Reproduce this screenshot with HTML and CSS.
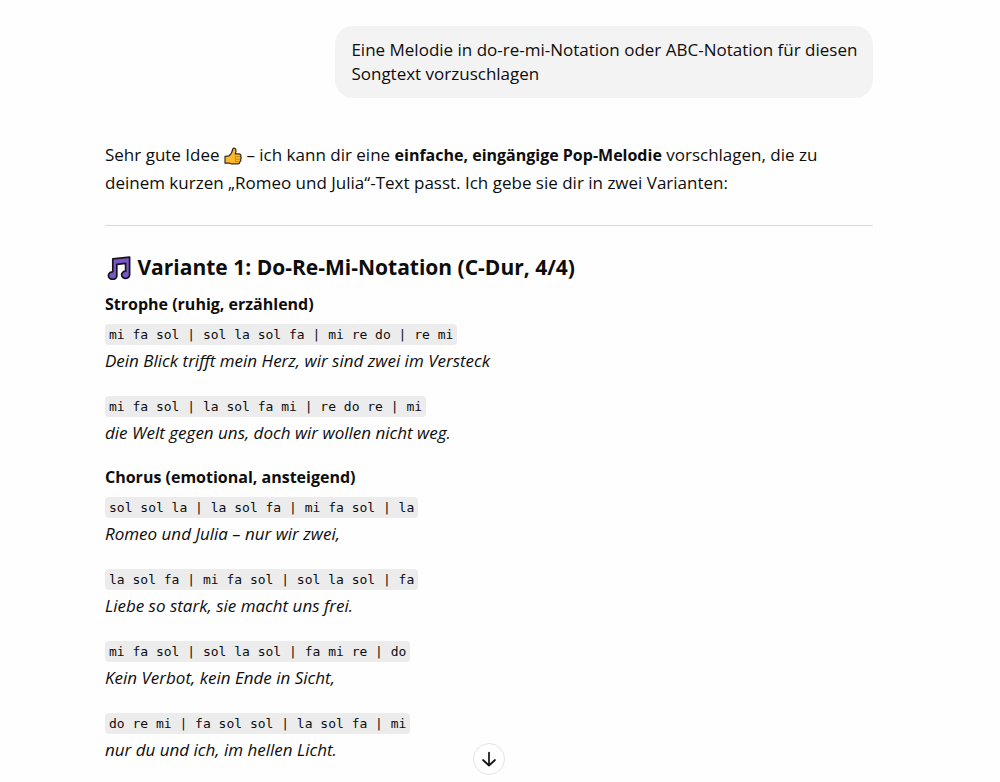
FILE: index.html
```html
<!DOCTYPE html>
<html lang="de">
<head>
<meta charset="utf-8">
<meta name="viewport" content="width=device-width, initial-scale=1">
<title>Melodie für Songtext</title>
<link rel="stylesheet" href="styles.css">
</head>
<body>
<main class="chat">
  <div class="thread">
    <div class="user-message">Eine Melodie in do-re-mi-Notation oder ABC-Notation für diesen Songtext vorzuschlagen</div>
    <article class="answer">
      <p class="intro">Sehr gute Idee <svg class="thumb" viewBox="0 0 18 18" role="img" aria-label="Daumen hoch"><path d="M1 9.4 L5 8.8 C7.4 7 8.4 4.6 8.9 1.6 C10 .6 11.8 1.4 12 3.2 C12.1 4.7 11.6 5.6 11.2 6.8 H15.2 C16.8 7 17.3 8.7 16.6 9.6 C17.4 10.5 17.3 11.8 16.6 12.3 C17 13.3 16.8 14.3 15.8 14.7 C15.8 16 15 16.8 13.6 16.8 H7.4 C6.6 16.8 6 16.3 5.2 16.2 L1 16.2 Z" fill="#fcb827" stroke="#302b26" stroke-width="1.2" stroke-linejoin="round"/><path d="M12 9.6H16M12 12.2H16M12 14.6H15.4M11.4 8.4V15" fill="none" stroke="#b9781c" stroke-width=".7"/></svg> – ich kann dir eine <strong>einfache, eingängige Pop-Melodie</strong> vorschlagen, die zu deinem kurzen „Romeo und Julia“-Text passt. Ich gebe sie dir in zwei Varianten:</p>
      <hr class="divider">
      <h3 class="title"><svg class="notes" viewBox="0 0 26 24" role="img" aria-label="Noten"><path d="M7.8 2.8 L24.6 1.2 V18.4 A4 3.6 0 1 1 20.6 15.2 V7.4 L11.8 8.3 V19.2 A4.2 3.8 0 1 1 7.8 15.8 Z" fill="#7659c4" stroke="#17131c" stroke-width="1.7" stroke-linejoin="round"/></svg> Variante 1: Do-Re-Mi-Notation (C-Dur, 4/4)</h3>
      <section class="part">
        <h4 class="part-name">Strophe (ruhig, erzählend)</h4>
        <p class="verse"><code class="tune">mi fa sol | sol la sol fa | mi re do | re mi</code><br><em>Dein Blick trifft mein Herz, wir sind zwei im Versteck</em></p>
        <p class="verse"><code class="tune">mi fa sol | la sol fa mi | re do re | mi</code><br><em>die Welt gegen uns, doch wir wollen nicht weg.</em></p>
      </section>
      <section class="part">
        <h4 class="part-name">Chorus (emotional, ansteigend)</h4>
        <p class="verse"><code class="tune">sol sol la | la sol fa | mi fa sol | la</code><br><em>Romeo und Julia – nur wir zwei,</em></p>
        <p class="verse"><code class="tune">la sol fa | mi fa sol | sol la sol | fa</code><br><em>Liebe so stark, sie macht uns frei.</em></p>
        <p class="verse"><code class="tune">mi fa sol | sol la sol | fa mi re | do</code><br><em>Kein Verbot, kein Ende in Sicht,</em></p>
        <p class="verse"><code class="tune">do re mi | fa sol sol | la sol fa | mi</code><br><em>nur du und ich, im hellen Licht.</em></p>
      </section>
    </article>
  </div>
  <button class="scroll-down" type="button" aria-label="Nach unten scrollen"><svg class="arrow" viewBox="0 0 20 20" aria-hidden="true"><path d="M10 3.5V16.5M4 11L10 16.5L16 11" fill="none" stroke="#111" stroke-width="1.7" stroke-linecap="round" stroke-linejoin="round"/></svg></button>
</main>
</body>
</html>
```

FILE: styles.css
```css
* {
  box-sizing: border-box;
}

body {
  margin: 0;
  background: #fefefe;
  color: #0d0d0d;
  font-family: "Segoe UI", "Open Sans", "Noto Sans", sans-serif;
  font-size: 17px;
  line-height: 28px;
}

.chat {
  padding: 26px 22px 16px 0;
}

.thread {
  display: flex;
  flex-direction: column;
  gap: 43px;
  max-width: 768px;
  margin: 0 auto;
}

.user-message {
  align-self: flex-end;
  max-width: 70%;
  padding: 12px 8px 12px 16px;
  border-radius: 18px;
  background: #f3f3f3;
  line-height: 24px;
}

.intro {
  margin: 0;
}

.intro strong {
  font-size: 16px;
}

.thumb {
  width: 18px;
  height: 18px;
  vertical-align: -4px;
}

.divider {
  height: 1px;
  margin: 28px 0 27px;
  border: 0;
  background: #d9d9d9;
}

.title {
  margin: 0 0 9px;
  font-size: 21px;
  font-weight: 700;
}

.notes {
  width: 26px;
  height: 24px;
  margin-right: 1px;
  vertical-align: -5px;
}

.part + .part {
  margin-top: 16px;
}

.part-name {
  margin: 0;
  font-size: 16px;
  font-weight: 700;
}

.verse {
  margin: 0;
}

.verse + .verse {
  margin-top: 16px;
}

.part-name + .verse {
  margin-top: 1px;
}

.tune {
  padding: 3px 4px;
  border-radius: 4px;
  background: #ececec;
  font-family: Consolas, "DejaVu Sans Mono", monospace;
  font-size: 13px;
  line-height: 16px;
}

.scroll-down {
  position: fixed;
  bottom: 7px;
  left: calc(50% - 27px);
  display: grid;
  place-items: center;
  width: 32px;
  height: 32px;
  padding: 0;
  border: 1px solid #e2e2e2;
  border-radius: 50%;
  background: #fff;
}

.arrow {
  width: 20px;
  height: 20px;
}
```
